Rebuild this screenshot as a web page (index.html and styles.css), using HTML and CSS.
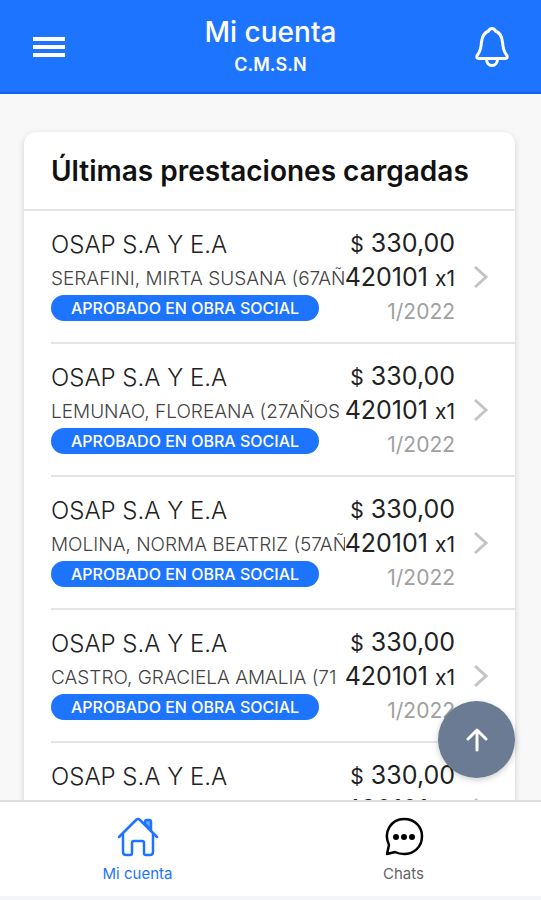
FILE: index.html
```html
<!DOCTYPE html>
<html lang="es">
<head>
  <meta charset="UTF-8" />
  <meta name="viewport" content="width=device-width, initial-scale=1.0" />
  <title>Mi cuenta</title>
  <link rel="stylesheet" href="styles.css">
</head>
<body>
  <header class="topbar">
    <button type="button" class="icon-btn" aria-label="Menú">
      <svg width="34" height="24" viewBox="0 0 34 24" fill="none" stroke="currentColor" stroke-width="4">
        <path d="M1 4H33M1 12H33M1 20H33" />
      </svg>
    </button>
    <div class="topbar-title">
      <h1>Mi cuenta</h1>
      <p>C.M.S.N</p>
    </div>
    <button type="button" class="icon-btn" aria-label="Notificaciones">
      <svg width="34" height="42" viewBox="0 0 34 42" fill="none" stroke="currentColor" stroke-width="3" stroke-linejoin="round">
        <path d="M17 2.500C15 2.500 14 4 13.500 5C8.500 7 7 11 6.500 16C6 23 5 26 2.500 29C1 31 2 32.500 4 32.500H30C32 32.500 33 31 31.500 29C29 26 28 23 27.500 16C27 11 25.500 7 20.500 5C20 4 19 2.500 17 2.500Z" />
        <path d="M11.500 33C11.500 37 14 39.500 17 39.500S22.500 37 22.500 33" />
      </svg>
    </button>
  </header>

  <main class="content">
    <section class="card">
      <h2>Últimas prestaciones cargadas</h2>
      <ul class="list">
        <li>
          <a href="#" class="item">
            <div class="item-info">
              <div class="item-name">OSAP S.A Y E.A</div>
              <div class="item-patient">SERAFINI, MIRTA SUSANA (67AÑ</div>
              <span class="badge">APROBADO EN OBRA SOCIAL</span>
            </div>
            <div class="item-data">
              <div class="amount"><small>$</small> 330,00</div>
              <div class="code">420101 <small>x1</small></div>
              <div class="period">1/2022</div>
            </div>
            <svg class="chevron" width="16" height="24" viewBox="0 0 16 24"><path d="M2 2L13 12L2 22" /></svg>
          </a>
        </li>
        <li>
          <a href="#" class="item">
            <div class="item-info">
              <div class="item-name">OSAP S.A Y E.A</div>
              <div class="item-patient">LEMUNAO, FLOREANA (27AÑOS</div>
              <span class="badge">APROBADO EN OBRA SOCIAL</span>
            </div>
            <div class="item-data">
              <div class="amount"><small>$</small> 330,00</div>
              <div class="code">420101 <small>x1</small></div>
              <div class="period">1/2022</div>
            </div>
            <svg class="chevron" width="16" height="24" viewBox="0 0 16 24"><path d="M2 2L13 12L2 22" /></svg>
          </a>
        </li>
        <li>
          <a href="#" class="item">
            <div class="item-info">
              <div class="item-name">OSAP S.A Y E.A</div>
              <div class="item-patient">MOLINA, NORMA BEATRIZ (57AÑ</div>
              <span class="badge">APROBADO EN OBRA SOCIAL</span>
            </div>
            <div class="item-data">
              <div class="amount"><small>$</small> 330,00</div>
              <div class="code">420101 <small>x1</small></div>
              <div class="period">1/2022</div>
            </div>
            <svg class="chevron" width="16" height="24" viewBox="0 0 16 24"><path d="M2 2L13 12L2 22" /></svg>
          </a>
        </li>
        <li>
          <a href="#" class="item">
            <div class="item-info">
              <div class="item-name">OSAP S.A Y E.A</div>
              <div class="item-patient">CASTRO, GRACIELA AMALIA (71</div>
              <span class="badge">APROBADO EN OBRA SOCIAL</span>
            </div>
            <div class="item-data">
              <div class="amount"><small>$</small> 330,00</div>
              <div class="code">420101 <small>x1</small></div>
              <div class="period">1/2022</div>
            </div>
            <svg class="chevron" width="16" height="24" viewBox="0 0 16 24"><path d="M2 2L13 12L2 22" /></svg>
          </a>
        </li>
        <li>
          <a href="#" class="item">
            <div class="item-info">
              <div class="item-name">OSAP S.A Y E.A</div>
            </div>
            <div class="item-data">
              <div class="amount"><small>$</small> 330,00</div>
              <div class="code">420101 <small>x1</small></div>
            </div>
            <svg class="chevron" width="16" height="24" viewBox="0 0 16 24"><path d="M2 2L13 12L2 22" /></svg>
          </a>
        </li>
      </ul>
    </section>
  </main>

  <footer class="footer">
    <button type="button" class="fab" aria-label="Subir">
      <svg width="24" height="24" viewBox="0 0 24 24" fill="none" stroke="currentColor" stroke-width="3" stroke-linecap="round" stroke-linejoin="round">
        <path d="M12 22V3M3 11L12 2L21 11" />
      </svg>
    </button>
    <nav class="tabs">
      <a href="#" class="tab active">
        <svg width="42" height="42" viewBox="0 0 42 42" fill="none" stroke="currentColor" stroke-width="2.500" stroke-linecap="round" stroke-linejoin="round">
          <path d="M2 21L19 4Q21 2 23 4L40 21" />
          <path d="M6 18V36Q6 39 9 39H13Q15 39 15 37V27Q15 25 17 25H25Q27 25 27 27V37Q27 39 29 39H33Q36 39 36 36V18" />
          <path d="M28 8V6Q28 4 30 4H32Q34 4 34 6V14Z" fill="#6fa5ff" />
        </svg>
        <span>Mi cuenta</span>
      </a>
      <a href="#" class="tab">
        <svg width="42" height="42" viewBox="0 0 42 42" fill="none" stroke="#000" stroke-width="2.500" stroke-linejoin="round">
          <path d="M4 38L6 29C0 16 8 3 21 3C32 3 39 11 39 20C39 31 31 38 21 38C17 38 14 37 12 36Z" />
          <g fill="#000" stroke="none">
            <circle cx="13" cy="21" r="3" />
            <circle cx="21" cy="21" r="3" />
            <circle cx="29" cy="21" r="3" />
          </g>
        </svg>
        <span>Chats</span>
      </a>
    </nav>
  </footer>
</body>
</html>
```

FILE: styles.css
```css
* {
  box-sizing: border-box;
}

body {
  font-family: Inter, "Liberation Sans", sans-serif;
  background: #f4f5f8;
  color: #222;
  display: flex;
  flex-direction: column;
  height: 100vh;
  margin: 0;
}

h1,
h2,
p,
ul {
  margin: 0;
  padding: 0;
}

a {
  color: inherit;
  text-decoration: none;
}

button {
  border: none;
  padding: 0;
  cursor: pointer;
}

svg {
  display: block;
}

.topbar {
  background: #1d74ff;
  color: white;
  border-bottom: 2px solid #0d63ee;
  padding: 14px 32px 12px;
  display: flex;
  align-items: center;
  justify-content: space-between;
}

.topbar-title {
  text-align: center;
}

.topbar h1 {
  font-size: 28px;
  line-height: 36px;
  font-weight: 500;
}

.topbar p {
  font-size: 18px;
  line-height: 30px;
  font-weight: 600;
}

.icon-btn {
  background: none;
  color: white;
}

.content {
  flex: 1;
  min-height: 0;
  overflow: hidden;
  background: #f8f8f8;
  padding: 38px 26px 0 24px;
}

.card {
  background: white;
  border-radius: 12px;
  box-shadow: 0 2px 6px rgba(0, 0, 0, 0.16);
}

.card h2 {
  font-size: 28px;
  line-height: 34px;
  font-weight: 600;
  color: #111;
  padding: 22px 27px 21px;
  border-bottom: 2px solid #e4e4e4;
}

.list {
  list-style: none;
  padding-left: 27px;
}

.item {
  display: flex;
  align-items: center;
  height: 133px;
  padding-right: 26px;
  border-bottom: 2px solid #e4e4e4;
}

.item-info {
  flex: 1;
  min-width: 0;
  align-self: flex-start;
  padding-top: 16px;
}

.item-name {
  font-size: 24px;
  line-height: 36px;
  font-weight: 300;
}

.item-patient {
  font-size: 19px;
  line-height: 32px;
  font-weight: 300;
  color: #444;
  white-space: nowrap;
  overflow: hidden;
}

.badge {
  display: inline-block;
  background: #1d74ff;
  color: white;
  border-radius: 13px;
  padding: 0 20px;
  font-size: 16px;
  line-height: 26px;
  font-weight: 500;
  white-space: nowrap;
}

.item-data {
  flex-shrink: 0;
  align-self: flex-start;
  padding-top: 15px;
  text-align: right;
  white-space: nowrap;
}

.amount,
.code {
  font-size: 25px;
  line-height: 34px;
}

.item-data small {
  font-size: 21px;
  line-height: 1;
}

.period {
  font-size: 21px;
  line-height: 36px;
  color: #a0a0a0;
}

.chevron {
  flex-shrink: 0;
  margin-left: 18px;
  fill: none;
  stroke: #c4c4c4;
  stroke-width: 3;
}

.footer {
  position: relative;
  background: white;
  border-top: 2px solid #dedede;
  margin-bottom: 4px;
}

.tabs {
  display: flex;
  justify-content: center;
}

.tab {
  flex: 0 1 266px;
  display: flex;
  flex-direction: column;
  align-items: center;
  gap: 4px;
  padding: 14px 0 10px;
  font-size: 15px;
  line-height: 24px;
  color: #666;
}

.tab.active {
  color: #1d74ff;
}

/* floats over the end of the list */
.fab {
  position: absolute;
  right: 26px;
  bottom: 100%;
  width: 77px;
  height: 77px;
  margin-bottom: 24px;
  border-radius: 50%;
  background: #6b7b93;
  color: white;
  display: flex;
  align-items: center;
  justify-content: center;
  box-shadow: 0 2px 6px rgba(0, 0, 0, 0.2);
}
```
